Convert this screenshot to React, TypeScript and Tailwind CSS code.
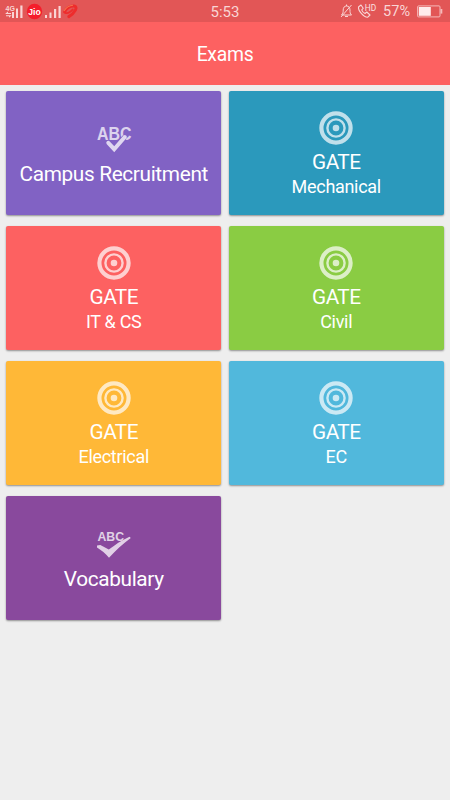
import { clsx } from 'clsx';

type IconName = 'target' | 'abcCheck' | 'abcSwoosh';

interface Exam {
  title: string;
  subtitle?: string;
  icon: IconName;
  color: string;
}

const EXAMS: Exam[] = [
  { title: 'Campus Recruitment', icon: 'abcCheck', color: 'bg-[#8162c4]' },
  { title: 'GATE', subtitle: 'Mechanical', icon: 'target', color: 'bg-[#2b99bc]' },
  { title: 'GATE', subtitle: 'IT & CS', icon: 'target', color: 'bg-[#fd6161]' },
  { title: 'GATE', subtitle: 'Civil', icon: 'target', color: 'bg-[#8acc43]' },
  { title: 'GATE', subtitle: 'Electrical', icon: 'target', color: 'bg-[#ffb837]' },
  { title: 'GATE', subtitle: 'EC', icon: 'target', color: 'bg-[#51b8dc]' },
  { title: 'Vocabulary', icon: 'abcSwoosh', color: 'bg-[#89499d]' },
];

function TargetIcon() {
  return (
    <svg width="34" height="34" viewBox="0 0 34 34" fill="none" stroke="#fff" opacity="0.7">
      <circle cx="17" cy="17" r="14.6" strokeWidth="4.2" />
      <circle cx="17" cy="17" r="8.6" strokeWidth="2.4" />
      <circle cx="17" cy="17" r="3.3" fill="#fff" stroke="none" />
    </svg>
  );
}

function AbcCheckIcon({ knockout }: { knockout: string }) {
  return (
    <svg width="40" height="34" viewBox="0 0 40 34">
      <text
        x="3"
        y="18"
        textLength="34.5"
        lengthAdjust="spacingAndGlyphs"
        fill="#fff"
        opacity="0.72"
        className="font-['Liberation_Sans'] text-[17.5px] font-bold"
      >
        ABC
      </text>
      {/* Card-coloured outline keeps the tick readable over the letters */}
      <path d="M14.3 20.8L20.2 27.2L30.8 15" fill="none" stroke={knockout} strokeWidth="5" />
      <path
        d="M14.3 20.8L20.2 27.2L30.8 15"
        fill="none"
        stroke="#fff"
        strokeWidth="4"
        strokeLinecap="round"
        opacity="0.75"
      />
    </svg>
  );
}

function AbcSwooshIcon() {
  return (
    <svg width="36" height="34" viewBox="0 0 36 34" fill="#fff" opacity="0.75">
      <text
        x="1.5"
        y="14.3"
        textLength="26.5"
        lengthAdjust="spacingAndGlyphs"
        className="font-['Liberation_Sans'] text-[13.5px] font-bold"
      >
        ABC
      </text>
      <path d="M1 18.5L4.3 18L12.8 22.6C19 18 25 13.5 33.5 9.8L34.8 11C27 16.5 19.5 23.5 13 30.8C9.5 26.8 5.5 23.2 1 20.6Z" />
    </svg>
  );
}

function ExamCard({ exam }: { exam: Exam }) {
  return (
    <div
      className={clsx(
        'flex h-[124.6px] flex-col items-center rounded-[2px] text-white shadow-[0_1px_2px_rgba(0,0,0,0.4)]',
        exam.subtitle ? 'pt-5' : 'pt-[31px]',
        exam.color
      )}
    >
      {exam.icon === 'target' && <TargetIcon />}
      {exam.icon === 'abcCheck' && <AbcCheckIcon knockout="#8162c4" />}
      {exam.icon === 'abcSwoosh' && <AbcSwooshIcon />}
      <h2
        className={clsx(
          'text-[20.8px] leading-6 whitespace-nowrap',
          exam.subtitle ? 'mt-[5px] tracking-[-0.6px]' : 'mt-1.5 tracking-[-0.35px]'
        )}
      >
        {exam.title}
      </h2>
      {exam.subtitle && (
        <p className="mt-0.5 text-[18px] leading-[21px] tracking-[-0.3px]">{exam.subtitle}</p>
      )}
    </div>
  );
}

function SignalBars() {
  return (
    <svg width="17" height="13" viewBox="0 0 17 13" fill="#f9d5d5">
      <rect x="0" y="10" width="2" height="3" />
      <rect x="4.5" y="7.5" width="2" height="5.5" />
      <rect x="9" y="4" width="2.2" height="9" />
      <rect x="13.5" y="1" width="2.2" height="12" />
    </svg>
  );
}

function StatusBar() {
  return (
    <div className="grid h-[22px] grid-cols-[1fr_auto_1fr] items-center bg-[#e25656] text-[#f9d5d5]">
      <div className="flex items-center pl-[5px]">
        <svg width="19" height="15" viewBox="0 0 19 15" fill="#f9d5d5">
          <text x="0.5" y="6.5" className="font-['Liberation_Sans'] text-[7px] font-bold">4G</text>
          <path d="M0.5 9.5L3 7.5V9H6V10H0.5ZM6.5 11.5L4 13.8V12.2H1V11.2H6.5Z" />
          <rect x="7" y="8" width="2" height="6" />
          <rect x="11" y="4.5" width="2" height="9.5" />
          <rect x="15.3" y="1.5" width="2.2" height="12.5" />
        </svg>
        <svg width="17" height="17" viewBox="0 0 17 17" className="ml-[2px]">
          <circle cx="8.5" cy="8.5" r="7.7" fill="#f51d2b" />
          <text
            x="2.2"
            y="11.5"
            textLength="12.5"
            lengthAdjust="spacingAndGlyphs"
            fill="#fff"
            className="font-['Liberation_Sans'] text-[8.5px] font-bold"
          >
            Jio
          </text>
        </svg>
        <div className="ml-[2px] flex">
          <SignalBars />
        </div>
        <svg width="16" height="16" viewBox="0 0 16 16" fill="none">
          <path
            d="M2.6 8.8C4.5 5 8.5 2.8 12 2.9C16.5 3.6 13 9.8 6.8 13.6"
            stroke="#ee2c2c"
            strokeWidth="3"
            strokeLinecap="round"
          />
          <path d="M3 9.8C5.5 11 9 8.5 10.8 6.4" stroke="#ee2c2c" strokeWidth="1.8" strokeLinecap="round" />
          <path d="M2 8C4 4.6 7.5 2.4 11 2.2" stroke="#f5704c" strokeWidth="1.1" />
        </svg>
      </div>
      <span className="pt-[2px] text-[15px] leading-5">5:53</span>
      <div className="flex items-center justify-end pr-[7px]">
        <svg width="13" height="14" viewBox="0 0 13 14" fill="none" stroke="#f9d5d5" strokeWidth="1">
          <path d="M1.5 11H11.5C10 9.5 10 8.5 10 6C10 3.5 8.5 2 6.5 2C4.5 2 3.2 3.5 3.2 6C3.2 8.5 3 9.5 1.5 11ZM5 12.5H8M6.5 0.5V2M11.5 1L1 13" />
        </svg>
        <svg width="20" height="16" viewBox="0 0 20 16" fill="none" className="ml-1">
          <path
            d="M4 2L1.5 4C1 7.5 6.5 14.3 10.5 14.3L13 12L9.8 9L8 10.5C6.3 9.7 5.2 8.3 4.7 6.8L6.2 5.3L4 2Z"
            stroke="#f9d5d5"
            strokeWidth="1.1"
            strokeLinejoin="round"
          />
          <text
            x="7.8"
            y="8"
            textLength="11.5"
            lengthAdjust="spacingAndGlyphs"
            fill="#fbe0e0"
            className="font-[Roboto,sans-serif] text-[9px]"
          >
            HD
          </text>
        </svg>
        <span className="ml-[6px] pt-[2px] text-[14.5px] leading-5">57%</span>
        <svg width="26" height="13" viewBox="0 0 26 13" className="ml-[7px]">
          <rect x="0.6" y="0.9" width="22.4" height="11" rx="1" fill="none" stroke="#f5baba" />
          <rect x="1.8" y="2" width="12" height="8.8" fill="#ffecec" />
          <rect x="23.5" y="4" width="1.8" height="4.6" fill="#f5baba" />
        </svg>
      </div>
    </div>
  );
}

export default function App() {
  return (
    <div className="h-[800px] w-[450px] overflow-hidden bg-[#eee] font-[Roboto,sans-serif]">
      <StatusBar />
      <header className="flex h-[63px] items-center justify-center bg-[#fd6161] pt-0.5">
        <h1 className="text-[19.4px] leading-6 tracking-[-0.3px] text-white">Exams</h1>
      </header>
      <main className="grid grid-cols-2 gap-x-[7.5px] gap-y-[10.4px] px-[6.25px] pt-[5.7px]">
        {EXAMS.map((exam) => (
          <ExamCard key={`${exam.title}-${exam.subtitle ?? ''}`} exam={exam} />
        ))}
      </main>
    </div>
  );
}
